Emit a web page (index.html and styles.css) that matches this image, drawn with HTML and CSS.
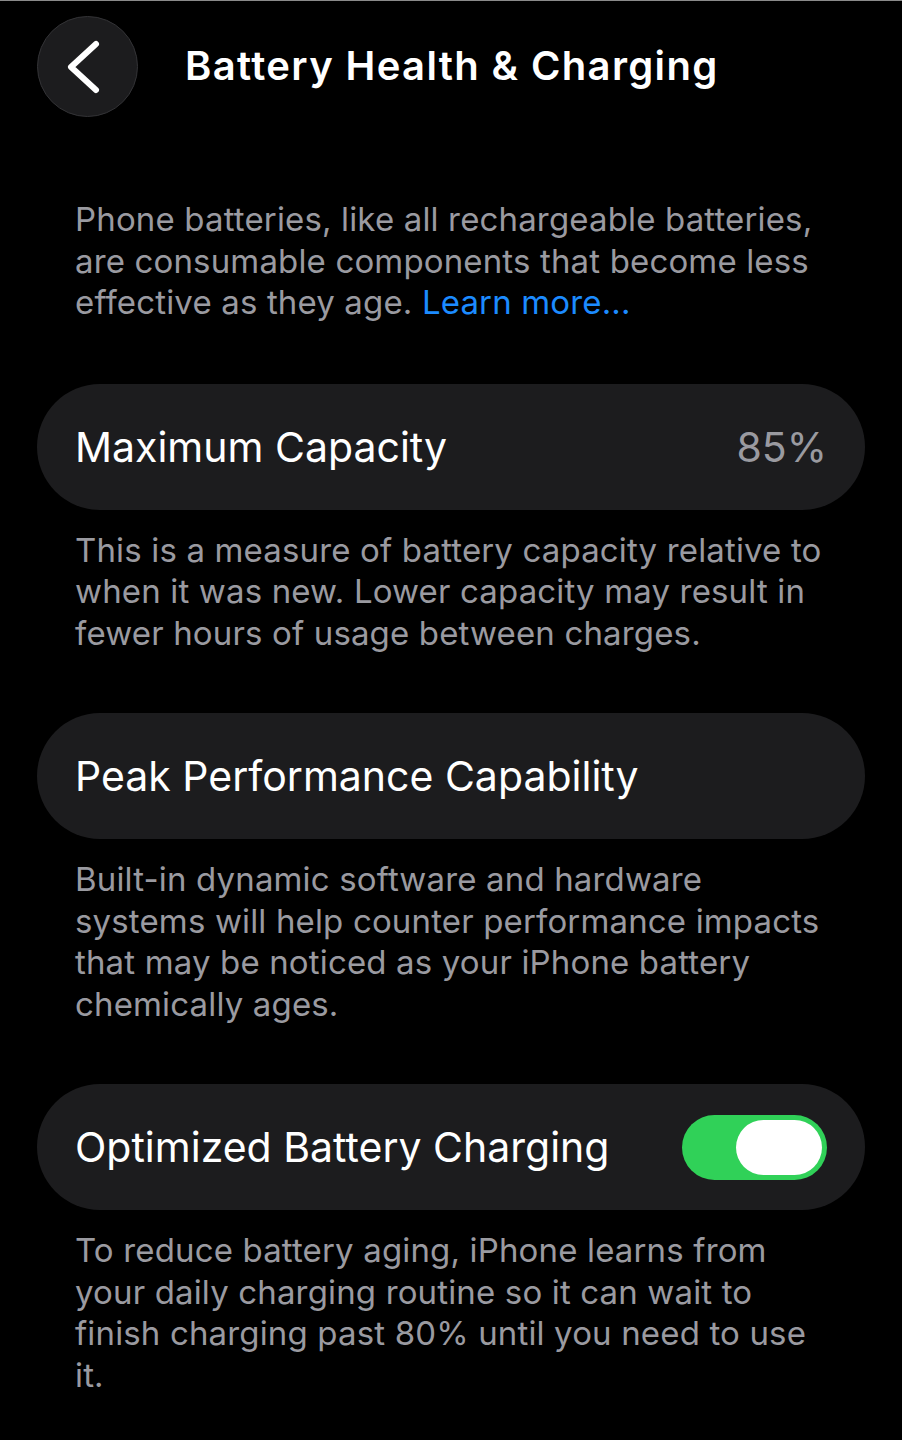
FILE: index.html
```html
<!DOCTYPE html>
<html>
<head>
	<meta charset="UTF-8">
	<title>Battery Health &amp; Charging</title>
	<link rel="stylesheet" href="styles.css">
</head>
<body>
	<div class="screen">
		<div class="nav">
			<div class="back">
				<svg width="100" height="100" viewBox="0 0 100 100">
					<polyline points="59,28 34,51 59,74" fill="none" stroke="#fff" stroke-width="6" stroke-linecap="round" stroke-linejoin="round"/>
				</svg>
			</div>
			<h1 class="title">Battery Health &amp; Charging</h1>
		</div>

		<p class="note intro">Phone batteries, like all rechargeable batteries, are consumable components that become less effective as they age. <a href="#" class="link">Learn more...</a></p>

		<div class="cell">
			<span class="label">Maximum Capacity</span>
			<span class="value">85%</span>
		</div>
		<p class="note">This is a measure of battery capacity relative to when it was new. Lower capacity may result in fewer hours of usage between charges.</p>

		<div class="cell">
			<span class="label">Peak Performance Capability</span>
		</div>
		<p class="note">Built-in dynamic software and hardware systems will help counter performance impacts that may be noticed as your iPhone battery chemically ages.</p>

		<div class="cell">
			<span class="label">Optimized Battery Charging</span>
			<div class="switch on"><div class="knob"></div></div>
		</div>
		<p class="note">To reduce battery aging, iPhone learns from your daily charging routine so it can wait to finish charging past 80% until you need to use it.</p>
	</div>
</body>
</html>
```
FILE: styles.css
```css
html, body{
	margin: 0;
	padding: 0;
	background: #000;
}
body{
	font-family: Inter, "Noto Sans", sans-serif;
	-webkit-font-smoothing: antialiased;
}
.screen{
	box-sizing: border-box;
	min-height: 1440px;
	border-top: 1px solid #8a8a8a;
	border-bottom: 2px solid #8a8a8a;
	padding: 15px 37px 40px;
	display: flex;
	flex-direction: column;
}
.nav{
	display: flex;
	align-items: center;
	gap: 47px;
	height: 101px;
}
.back{
	width: 99px;
	height: 99px;
	border-radius: 50%;
	background: #1c1c1e;
	border: 1px solid #333336;
	flex: none;
}
.back svg{
	display: block;
	margin: -1px;
}
.title{
	margin: 0 0 3px;
	color: #fff;
	font-size: 40px;
	font-weight: 600;
	letter-spacing: 1.35px;
}
.note{
	margin: 20px 34px 59px 38px;
	color: #9a9aa0;
	font-size: 33px;
	line-height: 41.5px;
	letter-spacing: 0.15px;
}
.intro{
	margin-top: 82px;
	margin-bottom: 60px;
}
.link{
	color: #1c8bff;
	text-decoration: none;
}
.cell{
	height: 126px;
	border-radius: 63px;
	background: #1c1c1e;
	display: flex;
	align-items: center;
	justify-content: space-between;
	padding: 0 38px;
}
.label{
	color: #fff;
	font-size: 41px;
}
.value{
	color: #9a9aa0;
	font-size: 41px;
}
.switch{
	width: 145px;
	height: 65px;
	border-radius: 33px;
	background: #e5e5ea;
	display: flex;
	align-items: center;
	padding: 0 5px;
	box-sizing: border-box;
}
.switch.on{
	background: #30d158;
	justify-content: flex-end;
}
.knob{
	width: 86px;
	height: 55px;
	border-radius: 28px;
	background: #fff;
}
```
